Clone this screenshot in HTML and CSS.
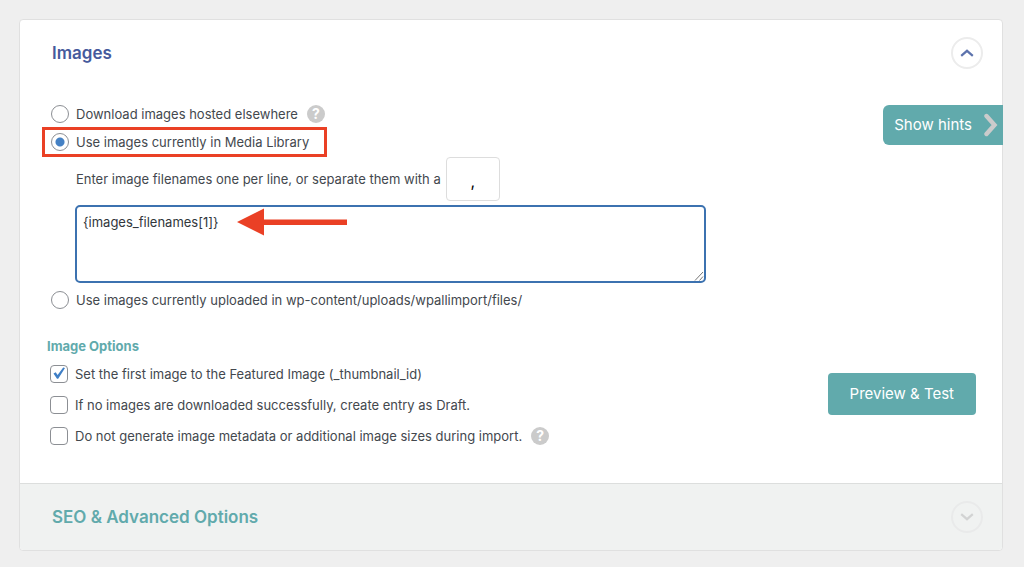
FILE: index.html
```html
<!DOCTYPE html>
<html lang="en">
<head>
<meta charset="utf-8">
<meta name="viewport" content="width=device-width, initial-scale=1">
<title>Images</title>
<link rel="stylesheet" href="styles.css">
</head>
<body>
<main class="panel">
  <section class="section">
    <header class="section-head">
      <h2 class="title title-open">Images</h2>
      <button class="toggle" type="button" aria-label="Collapse Images">
        <svg width="14" height="8" viewBox="0 0 14 8"><path d="M1.2 6.8 7 1.8l5.800 5" fill="none" stroke="#5d73ad" stroke-width="2.200"/></svg>
      </button>
    </header>
    <div class="section-body">
      <button class="hints" type="button">Show hints
        <svg width="16" height="24" viewBox="0 0 16 24"><path d="M3.500 3 11.500 12 3.500 21" fill="none" stroke="#cbcbcb" stroke-width="4.400" stroke-linecap="round"/></svg>
      </button>
      <div class="row">
        <input class="radio" type="radio" name="source" id="download">
        <label for="download">Download images hosted elsewhere</label>
        <button class="help" type="button" aria-label="Help">?</button>
      </div>
      <div class="row marked">
        <input class="radio" type="radio" name="source" id="library" checked>
        <label for="library">Use images currently in Media Library</label>
      </div>
      <div class="source-detail">
        <div class="separator-row">
          <label for="separator">Enter image filenames one per line, or separate them with a</label>
          <input class="separator" type="text" id="separator" value=",">
        </div>
        <div class="names-wrap">
          <textarea class="names" aria-label="Image filenames">{images_filenames[1]}</textarea>
          <svg class="arrow" width="112" height="28" viewBox="0 0 112 28"><path d="M1 14 28 .5V11.500h83v5.500H28v10.500z" fill="#ea4025"/></svg>
          <svg class="grip" width="10" height="10" viewBox="0 0 10 10"><path d="M1 9.500 9 1M5.500 9.500 9 5.500" fill="none" stroke="#777" stroke-width="1"/></svg>
        </div>
      </div>
      <div class="row">
        <input class="radio" type="radio" name="source" id="uploads">
        <label for="uploads">Use images currently uploaded in wp-content/uploads/wpallimport/files/</label>
      </div>
      <h3 class="subtitle">Image Options</h3>
      <div class="options">
        <div class="checks">
          <div class="check-row">
            <input class="check" type="checkbox" id="featured" checked>
            <label for="featured">Set the first image to the Featured Image (_thumbnail_id)</label>
            <svg class="tick" width="14" height="14" viewBox="0 0 14 14"><path d="M1.500 7.500 3.700 6.200 5.600 8.900 11.200 1.400 13 2 6.200 12.800H5z" fill="#3f7fc6"/></svg>
          </div>
          <div class="check-row">
            <input class="check" type="checkbox" id="draft">
            <label for="draft">If no images are downloaded successfully, create entry as Draft.</label>
          </div>
          <div class="check-row">
            <input class="check" type="checkbox" id="metadata">
            <label for="metadata">Do not generate image metadata or additional image sizes during import.</label>
            <button class="help" type="button" aria-label="Help">?</button>
          </div>
        </div>
        <button class="preview" type="button">Preview &amp; Test</button>
      </div>
    </div>
  </section>
  <section class="section closed">
    <header class="section-head">
      <h2 class="title">SEO &amp; Advanced Options</h2>
      <button class="toggle" type="button" aria-label="Expand SEO &amp; Advanced Options">
        <svg width="14" height="8" viewBox="0 0 14 8"><path d="M1.200 1.200 7 6.200l5.800-5" fill="none" stroke="#d2d3d3" stroke-width="2.200"/></svg>
      </button>
    </header>
  </section>
</main>
</body>
</html>
```
FILE: styles.css
```css
* {
  box-sizing: border-box;
}

body {
  margin: 0;
  padding: 19px 21px 16px 19px;
  background: #efefef;
  color: #43484e;
  font: 13px/20px Inter, "Liberation Sans", sans-serif;
}

button,
input,
textarea {
  margin: 0;
  font: inherit;
}

.panel {
  background: #fff;
  border: 1px solid #e0e0e0;
  border-radius: 4px;
}

.section {
  position: relative;
}

.section-head {
  display: flex;
  align-items: center;
  justify-content: space-between;
  padding: 17px 19px 17px 32px;
}

.title {
  margin: 0;
  color: #61aaac;
  font-size: 17px;
  line-height: 24px;
  font-weight: 600;
}

.title-open {
  color: #465a9c;
}

.toggle {
  display: flex;
  align-items: center;
  justify-content: center;
  width: 32px;
  height: 32px;
  padding: 0;
  background: transparent;
  border: 2px solid #ececec;
  border-radius: 50%;
}

.section-body {
  padding: 14px 26px 32px 31px;
}

.row,
.check-row {
  display: flex;
  align-items: center;
  gap: 7px;
  height: 28px;
}

.marked {
  position: relative;
  width: fit-content;
}

.marked::after {
  content: "";
  position: absolute;
  inset: -1px -18px -1px -9px;
  border: 3px solid #ea4025;
  pointer-events: none;
}

.radio,
.check {
  appearance: none;
  flex: none;
  width: 18px;
  height: 18px;
  background: #fff;
  border: 1px solid #8c8f94;
}

.radio {
  border-radius: 50%;
}

.radio:checked {
  background: radial-gradient(circle, #4581c4 4px, #fff 5px);
}

.check {
  border-radius: 4px;
}

.help {
  width: 18px;
  height: 18px;
  margin-left: 2px;
  padding: 0;
  background: #cbcbcb;
  border: 0;
  border-radius: 50%;
  color: #fff;
  font-size: 14px;
  line-height: 18px;
  font-weight: 700;
}

.source-detail {
  max-width: 655px;
  margin: 1px 0 3px;
  padding-left: 25px;
}

.separator-row {
  display: flex;
  align-items: center;
  gap: 5px;
}

.separator {
  width: 54px;
  height: 44px;
  padding: 4px 4px 0;
  background: #fff;
  border: 1px solid #ddd;
  border-radius: 4px;
  color: #000;
  font-size: 16px;
  text-align: center;
}

.names-wrap {
  position: relative;
  margin-left: -1px;
  margin-top: 4px;
}

.names {
  display: block;
  width: 100%;
  height: 78px;
  padding: 5px 6px;
  background: #fff;
  border: 2px solid #3c72b0;
  border-radius: 5px;
  color: #32373c;
  resize: none;
}

.arrow {
  position: absolute;
  left: 161px;
  top: 3px;
}

.grip {
  position: absolute;
  right: 2px;
  bottom: 2px;
}

.hints {
  position: absolute;
  right: -1px;
  top: 85px;
  display: flex;
  align-items: center;
  gap: 11px;
  height: 40px;
  padding: 0 4px 0 11px;
  background: #61aaac;
  border: 0;
  border-radius: 6px 0 0 6px;
  color: #fff;
  font-size: 15px;
}

.subtitle {
  margin: 22px 0 2px -4px;
  color: #61aaac;
  font-size: 13px;
  line-height: 20px;
  font-weight: 700;
}

.options {
  display: flex;
  align-items: flex-start;
  justify-content: space-between;
}

.checks {
  margin-left: -1px;
}

.check-row {
  position: relative;
  height: 31px;
}

.tick {
  position: absolute;
  left: 2px;
  top: 8px;
  pointer-events: none;
}

.preview {
  height: 42px;
  margin-top: 15px;
  padding: 0 22px;
  background: #61aaac;
  border: 0;
  border-radius: 4px;
  color: #fff;
  font-size: 15px;
}

.closed {
  background: #f0f2f1;
  border-top: 1px solid #dcdedd;
  border-radius: 0 0 4px 4px;
}

.closed .toggle {
  border-color: #e9eaea;
}
```
